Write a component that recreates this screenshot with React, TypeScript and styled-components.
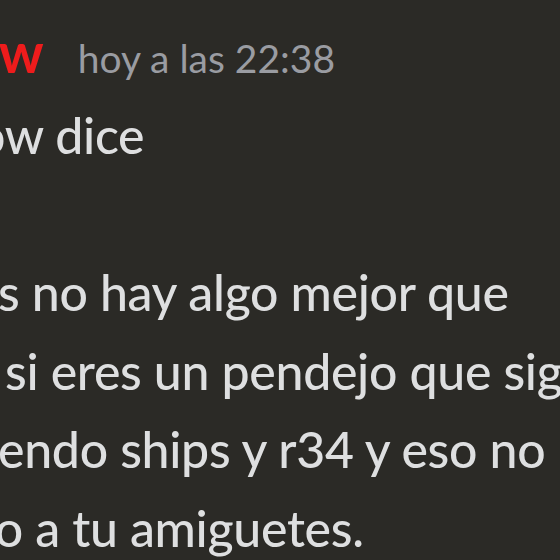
import React from "react";
import styled, { createGlobalStyle } from "styled-components";

const GlobalStyle = createGlobalStyle`
  html, body {
    margin: 0;
    padding: 0;
    background: #2b2a26;
  }
`;

const Chat = styled.div`
  width: 560px;
  height: 560px;
  overflow: hidden;
  background: #2b2a26;
  font-family: "Lato", "Noto Sans", sans-serif;
  font-weight: 500;
  color: #dedfe0;
  padding-top: 18px;
  box-sizing: border-box;
`;

const Header = styled.div`
  display: flex;
  align-items: baseline;
  gap: 34px;
  height: 78px;
  white-space: nowrap;
`;

const Username = styled.span<{ $shift: number }>`
  margin-left: ${(p) => p.$shift}px;
  color: #ee1c1c;
  font-size: 56px;
  font-weight: 700;
`;

const Timestamp = styled.span`
  color: #9a9ca2;
  font-size: 39px;
  font-weight: 400;
`;

const Line = styled.div<{ $shift: number }>`
  margin-left: ${(p) => p.$shift}px;
  font-size: 50px;
  letter-spacing: -0.3px;
  line-height: 78.5px;
  height: 78.5px;
  white-space: nowrap;
`;

const lines: { text: string; shift: number }[] = [
  { text: "ow dice", shift: -23 },
  { text: "\u00a0", shift: 0 },
  { text: "s no hay algo mejor que", shift: -2 },
  { text: "si eres un pendejo que sigue", shift: 5 },
  { text: "endo ships y r34 y eso no", shift: -2 },
  { text: "lo a tu amiguetes.", shift: -17 },
];

export default function App() {
  return (
    <>
      <GlobalStyle />
      <Chat>
        <Header>
          <Username $shift={-33}>ow</Username>
          <Timestamp>hoy a las 22:38</Timestamp>
        </Header>
        {lines.map((l, i) => (
          <Line key={i} $shift={l.shift}>
            {l.text}
          </Line>
        ))}
      </Chat>
    </>
  );
}
